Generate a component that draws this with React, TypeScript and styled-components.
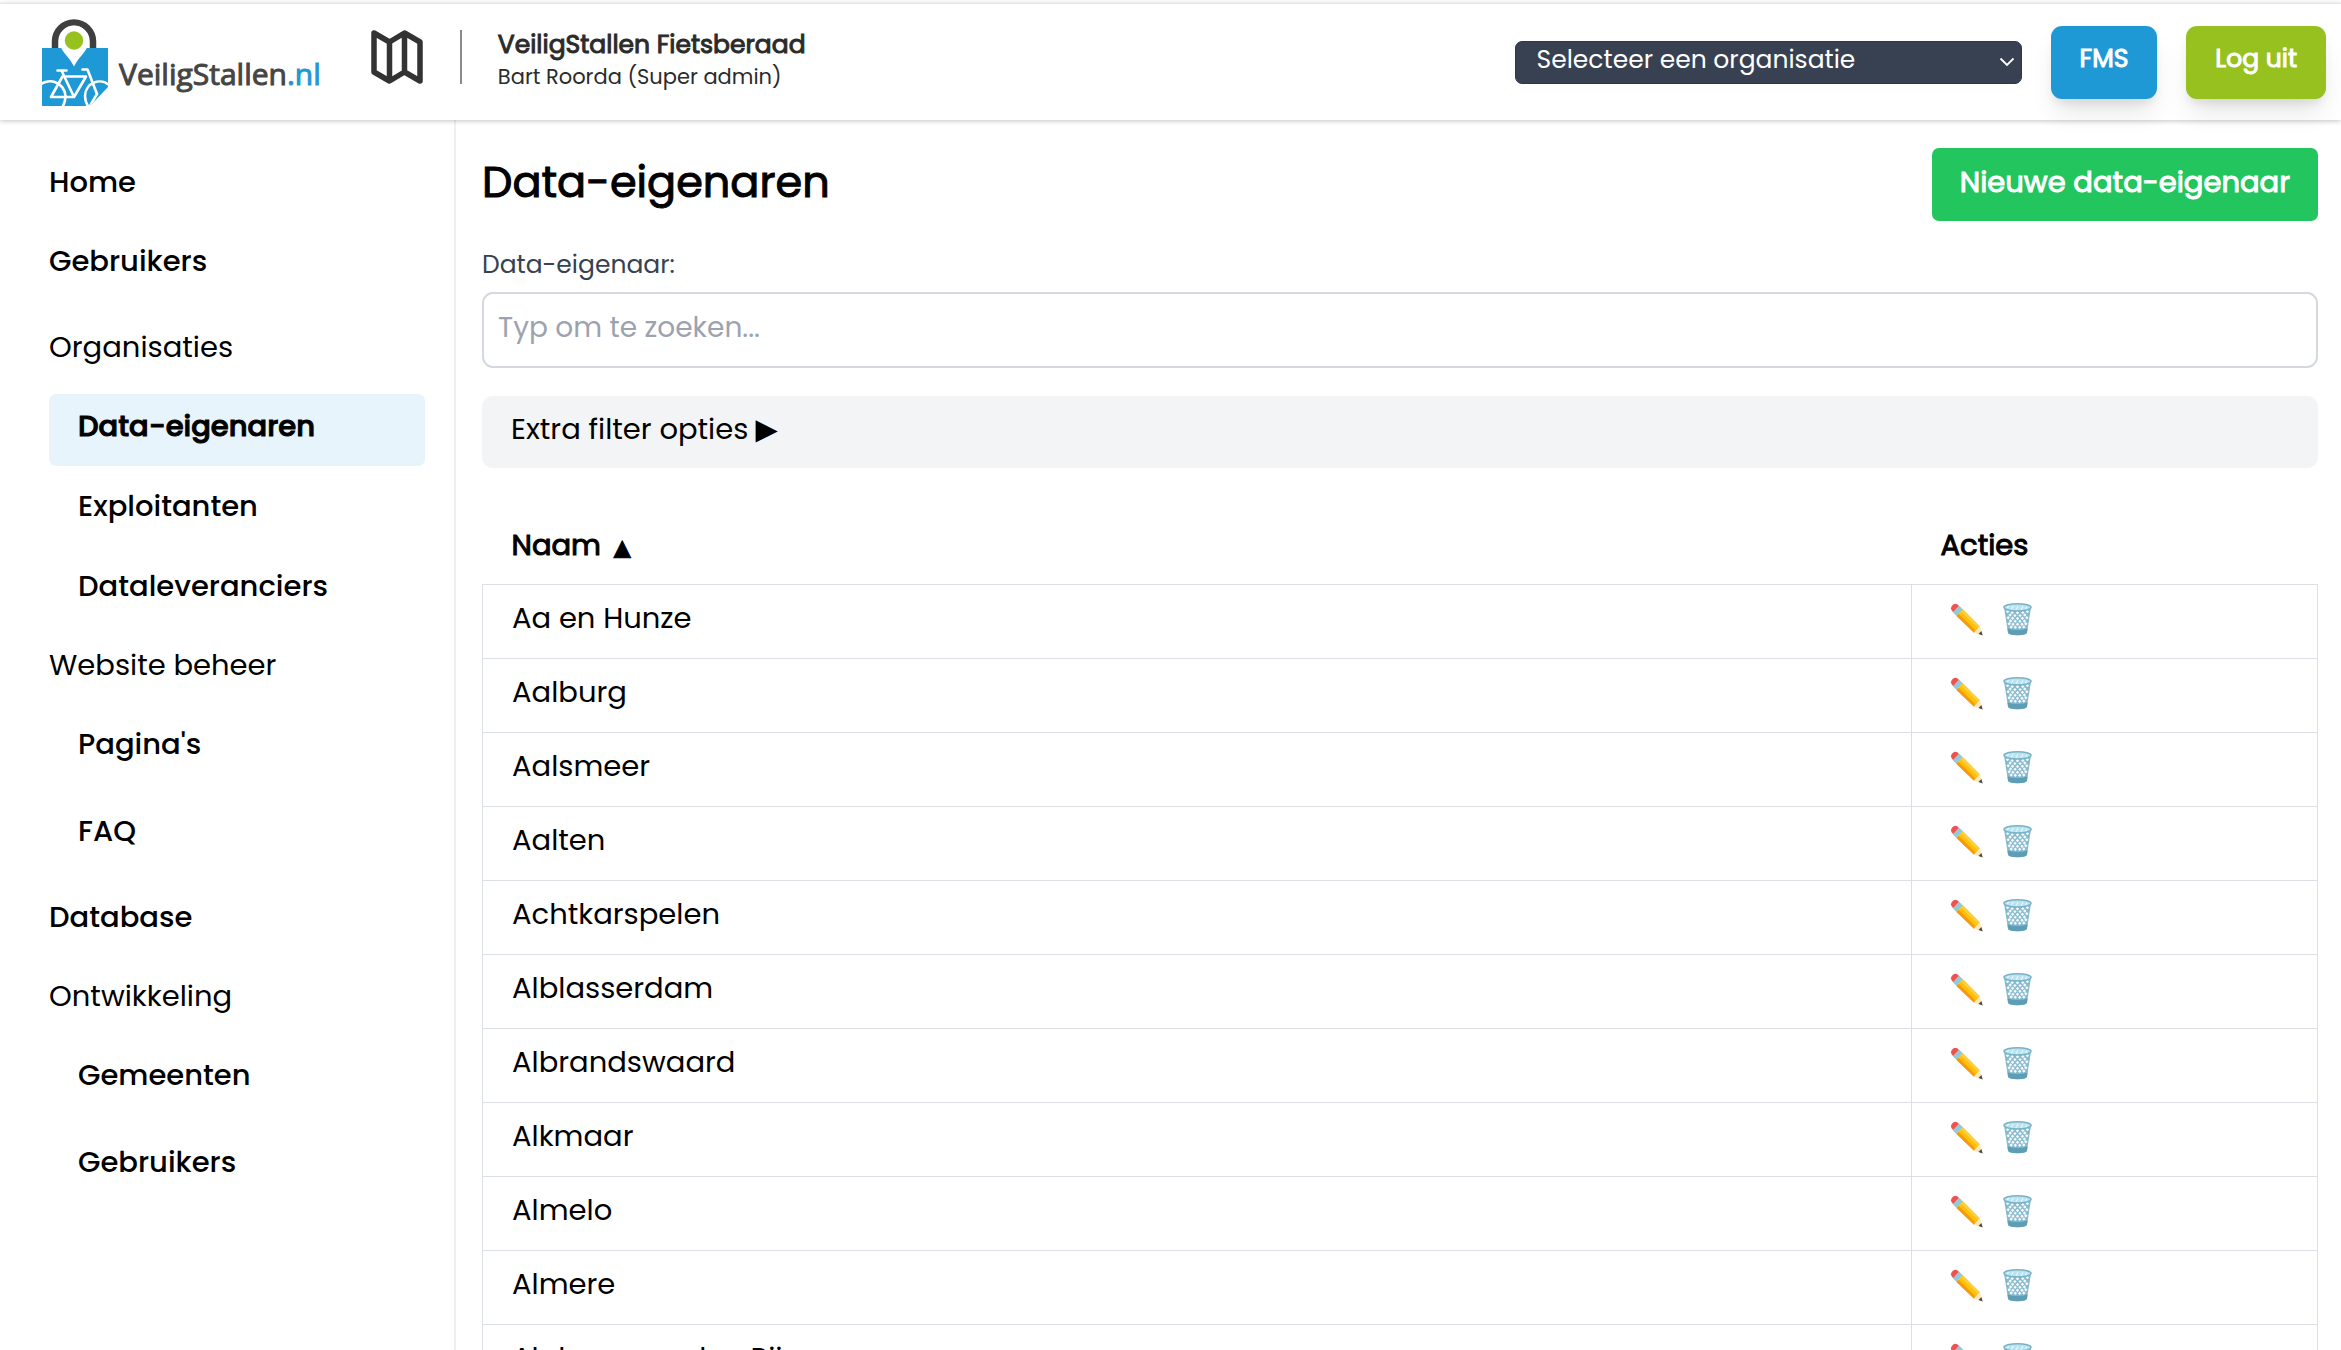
import React from "react";
import styled, { createGlobalStyle, css } from "styled-components";

const GlobalStyle = createGlobalStyle`
  *, *::before, *::after { box-sizing: border-box; }
  body {
    margin: 0;
    background: #fff;
    color: #000;
    font-family: Poppins, Inter, "Liberation Sans", sans-serif;
    font-size: 29px;
    line-height: 40px;
  }
  button, input, select { font: inherit; color: inherit; }
`;

/* Thickens the regular cut without changing its widths. */
const heavy = css`
  -webkit-text-stroke: 1px currentColor;
`;

const Shell = styled.div`
  display: flex;
  flex-direction: column;
  height: 100vh;
  overflow: hidden;
`;

const Header = styled.header`
  display: flex;
  align-items: center;
  flex: none;
  margin-top: 3px;
  padding: 12px 15px 12px 42px;
  height: 117px;
  border-top: 1px solid #e5e7eb;
  background: #fff;
  box-shadow: 0 1px 5px rgba(0, 0, 0, 0.24);
  z-index: 1;
`;

const LogoLink = styled.a`
  display: flex;
  align-items: center;
  gap: 11px;
  text-decoration: none;
  color: #454545;
`;

const LogoText = styled.span`
  ${heavy}
  padding-top: 24px;
  font-family: "Open Sans", "Noto Sans", sans-serif;
  font-size: 30px;
`;

const LogoSuffix = styled.span`
  color: #1f99d6;
`;

const MapLink = styled.a`
  display: flex;
  margin-left: 50px;
  padding-bottom: 10px;
  color: #333;
`;

const Divider = styled.div`
  width: 2px;
  height: 54px;
  margin: 0 36px 10px 37px;
  background: #8a8a8a;
`;

const Account = styled.div`
  flex: 1;
  padding-bottom: 2px;
  color: #2b2b2b;
  line-height: 32px;
`;

const AccountName = styled.div`
  ${heavy}
  font-size: 25px;
`;

const AccountRole = styled.div`
  font-size: 21px;
`;

const HeaderActions = styled.div`
  display: flex;
  align-items: center;
  gap: 29px;
`;

const SelectWrap = styled.div`
  display: grid;
  align-items: center;
  width: 507px;
  > * { grid-area: 1 / 1; }
  > svg { justify-self: end; margin-right: 7px; pointer-events: none; }
`;

const OrgSelect = styled.select`
  appearance: none;
  width: 100%;
  height: 43px;
  padding: 0 40px 4px 21px;
  border: 1px solid #2f3746;
  border-radius: 7px;
  background: #374151;
  color: #fff;
  font-size: 25px;
  line-height: 36px;
`;

const Button = styled.button<{ $tone: "blue" | "lime" | "green" }>`
  ${heavy}
  height: 73px;
  border: 0;
  color: #fff;
  cursor: pointer;
  white-space: nowrap;
  ${({ $tone }) =>
    $tone === "green"
      ? css`
          padding: 0 28px 6px;
          border-radius: 7px;
          background: #22c55e;
        `
      : css`
          padding: 0 29px 6px;
          border-radius: 11px;
          background: ${$tone === "blue" ? "#1f99d6" : "#96c11f"};
          box-shadow: 0 18px 27px -5px rgba(0, 0, 0, 0.1), 0 7px 11px -4px rgba(0, 0, 0, 0.1);
          font-size: 25px;
        `}
`;

const Body = styled.div`
  display: flex;
  flex: 1;
  min-height: 0;
`;

const Sidebar = styled.nav`
  flex: none;
  width: 456px;
  padding: 30px 29px 0 49px;
  border-right: 2px solid #f0f0f1;
`;

const Menu = styled.ul<{ $nested?: boolean }>`
  display: flex;
  flex-direction: column;
  gap: ${({ $nested }) => ($nested ? 8 : 7)}px;
  margin: ${({ $nested }) => ($nested ? "7px 0 0" : 0)};
  padding: 0;
  list-style: none;
`;

const MenuItem = styled.li<{ $spaced?: boolean }>`
  margin-top: ${({ $spaced }) => ($spaced ? 7 : 0)}px;
`;

const itemBox = css`
  display: block;
  height: 72px;
  padding: 12px 0 20px;
`;

const MenuHeading = styled.div`
  ${itemBox}
`;

const MenuLink = styled.a<{ $nested?: boolean; $active?: boolean }>`
  ${itemBox}
  padding-left: ${({ $nested }) => ($nested ? 29 : 0)}px;
  border-radius: 7px;
  background: ${({ $active }) => ($active ? "#e7f4fb" : "transparent")};
  color: inherit;
  font-weight: 500;
  text-decoration: none;
  ${({ $active }) => $active && heavy}
`;

const Main = styled.main`
  flex: 1;
  min-width: 0;
  overflow-y: auto;
  scrollbar-width: none;
  padding: 28px 23px 0 26px;
`;

const TitleRow = styled.div`
  display: flex;
  align-items: flex-start;
  justify-content: space-between;
  margin-bottom: 24px;
`;

const Title = styled.h1`
  ${heavy}
  margin: 0;
  font-size: 43px;
  font-weight: 400;
  line-height: 68px;
`;

const FieldLabel = styled.label`
  display: block;
  margin-bottom: 7px;
  color: #374151;
  font-size: 25px;
`;

const SearchInput = styled.input`
  display: block;
  width: 100%;
  height: 76px;
  padding: 0 14px 6px;
  border: 2px solid #d5d8de;
  border-radius: 11px;
  background: #fff;
  &::placeholder { color: #9ca3af; font-size: 28px; opacity: 1; }
`;

const FilterToggle = styled.button`
  display: flex;
  align-items: center;
  gap: 7px;
  width: 100%;
  height: 72px;
  margin: 28px 0 42px;
  padding: 0 29px 6px;
  border: 0;
  border-radius: 11px;
  background: #f3f4f6;
  cursor: pointer;
`;

const Marker = styled.span<{ $small?: boolean }>`
  margin-left: ${({ $small }) => ($small ? 5 : 0)}px;
  font-family: "DejaVu Sans", sans-serif;
  font-size: ${({ $small }) => ($small ? 22 : 29)}px;
  line-height: 1;
`;

const Table = styled.table`
  width: 100%;
  border-collapse: collapse;
  table-layout: fixed;
`;

const HeadCell = styled.th<{ $actions?: boolean }>`
  ${heavy}
  width: ${({ $actions }) => ($actions ? "406px" : "auto")};
  height: 74px;
  padding: 15px 29px 19px;
  font-weight: 400;
  text-align: left;
`;

const Cell = styled.td`
  height: 74px;
  padding: 13px 29px 20px;
  border: 1px solid #dcdfe4;
`;

const RowActions = styled.div`
  display: flex;
  gap: 20px;
  padding: 2px 0 0 9px;
`;

const IconButton = styled.button`
  display: flex;
  padding: 0;
  border: 0;
  background: none;
  cursor: pointer;
`;

const Logo = () => (
  <svg width="66" height="88" viewBox="0 0 66 88" aria-hidden="true">
    <clipPath id="logo-note">
      <path d="M0 30H66V69L48 88H0Z" />
    </clipPath>
    <path d="M13 34V23.500a19 19 0 0 1 38 0V34" fill="none" stroke="#3f3f3f" strokeWidth="6.500" />
    <path d="M0 30H66V69L48 88H0Z" fill="#1f99d6" />
    <path d="M32 48.500C27 38 17 32 17 22.500a15 15 0 0 1 30 0C47 32 37 38 32 48.500Z" fill="#fff" />
    <circle cx="32" cy="22.500" r="9.200" fill="#96c11f" />
    <g clipPath="url(#logo-note)" fill="none" stroke="#fff" strokeWidth="2.600" strokeLinejoin="round" strokeLinecap="round">
      <path d="M15.500 52.500H24.500M19.700 53 32 79M20.500 58.500H44L32 79H9L20.500 58.500" />
      <path d="M40.500 51.500H45.500L55 76" />
      <path d="M-4 69A15.500 15.500 0 0 1 23.500 78Q23.500 84 20 90" />
      <path d="M68 68A14.500 14.500 0 0 0 43 78Q43 84 47 90M55 76 48 88" />
    </g>
  </svg>
);

const MapIcon = () => (
  <svg width="52" height="54" viewBox="0 0 52 54" fill="none" stroke="currentColor" strokeWidth="5.500" strokeLinejoin="round" aria-hidden="true">
    <path d="M3 3 18.500 12 33.500 3 49 12V51L33.500 42 18.500 51 3 42ZM18.500 12V51M33.500 3V42" />
  </svg>
);

const Chevron = () => (
  <svg width="16" height="10" viewBox="0 0 16 10" fill="none" stroke="#fff" strokeWidth="1.800" aria-hidden="true">
    <path d="M1.500 1.500 8 8l6.500-6.500" />
  </svg>
);

const Pencil = () => (
  <svg width="33" height="33" viewBox="0 0 33 33" aria-hidden="true">
    <path d="M3.200 9.300 9.100 2.900Q6-.8 2.600 1.900-.9 5.400 3.200 9.300Z" fill="#ef5350" />
    <path d="M3 9.500 9.300 2.700 13.100 6.500 6.500 13Z" fill="#90cbd9" />
    <path d="M6.500 13 13.100 6.500 30 23.400 24 29.800Z" fill="#ffc107" />
    <path d="M6.500 13 8.700 10.800 26 28 24 29.800Z" fill="#f59a0c" />
    <path d="M11 8.600 13.100 6.500 30 23.400 28.300 25.600Z" fill="#fdd03b" />
    <path d="M24 29.800Q24.500 27.600 26.300 27.300 26.600 25.500 28.300 25.200 28.500 23.600 30 23.400L32.500 32.300Z" fill="#ffe6b5" />
    <path d="m28.500 31.100 2.900-3 1.300 4.300Z" fill="#4a4a4a" />
  </svg>
);

const TRASH_HOLES = [
  [4.6, 8.6], [9.2, 9.6], [14.5, 9.8], [19.8, 9.6], [24.4, 8.6],
  [7.2, 12], [11.9, 12.6], [17.1, 12.6], [21.8, 12],
  [5.2, 14.8], [9.6, 15.2], [14.5, 15.5], [19.4, 15.2], [23.8, 14.8],
  [7.6, 18], [12.1, 18.3], [16.9, 18.3], [21.4, 18],
  [6.2, 20.8], [10, 21.2], [14.5, 21.3], [19, 21.2], [22.8, 20.8],
  [8.2, 24], [12.3, 24.2], [16.7, 24.2], [20.8, 24],
];

const Trash = () => (
  <svg width="30" height="33" viewBox="0 0 30 33" aria-hidden="true">
    <path d="M1 4.500 5 29.500Q5.500 32.300 14.500 32.300T24 29.500L28 4.500Z" fill="#86b9cc" />
    <path d="M4.500 25.500Q14.500 28.500 24.500 25.500L24 29.500Q23.500 32.300 14.500 32.300T5 29.500Z" fill="#5d9db5" />
    {TRASH_HOLES.map(([x, y]) => (
      <path key={`${x}-${y}`} d={`M${x - 1.7} ${y}l1.700-1.700 1.700 1.700-1.700 1.700Z`} fill="#f7fcfe" />
    ))}
    <ellipse cx="14.500" cy="4.300" rx="13.600" ry="3.600" fill="#b9e2ee" stroke="#78b2c7" strokeWidth="1.400" />
    <path d="M4 4.800 6 3.200M8 6.200 10.500 3M13 6.800 15 3.200M18 6.600 20 3.200M22.500 6 24 3.600" stroke="#e9f7fb" strokeWidth="1.200" />
  </svg>
);

type Entry = { label: string; spaced?: boolean; active?: boolean; children?: Entry[] };

const MENU: Entry[] = [
  { label: "Home" },
  { label: "Gebruikers" },
  {
    label: "Organisaties",
    spaced: true,
    children: [{ label: "Data-eigenaren", active: true }, { label: "Exploitanten" }, { label: "Dataleveranciers" }],
  },
  { label: "Website beheer", children: [{ label: "Pagina's" }, { label: "FAQ", spaced: true }] },
  { label: "Database", spaced: true },
  { label: "Ontwikkeling", children: [{ label: "Gemeenten" }, { label: "Gebruikers", spaced: true }] },
];

const OWNERS = [
  "Aa en Hunze",
  "Aalburg",
  "Aalsmeer",
  "Aalten",
  "Achtkarspelen",
  "Alblasserdam",
  "Albrandswaard",
  "Alkmaar",
  "Almelo",
  "Almere",
  "Alphen aan den Rijn",
];

const MenuEntries = ({ entries, nested }: { entries: Entry[]; nested?: boolean }) => (
  <Menu $nested={nested}>
    {entries.map((entry) => (
      <MenuItem key={entry.label} $spaced={entry.spaced}>
        {entry.children ? (
          <>
            <MenuHeading>{entry.label}</MenuHeading>
            <MenuEntries entries={entry.children} nested />
          </>
        ) : (
          <MenuLink href="#" $nested={nested} $active={entry.active}>
            {entry.label}
          </MenuLink>
        )}
      </MenuItem>
    ))}
  </Menu>
);

export default function App() {
  return (
    <Shell>
      <GlobalStyle />
      <Header>
        <LogoLink href="#">
          <Logo />
          <LogoText>
            VeiligStallen<LogoSuffix>.nl</LogoSuffix>
          </LogoText>
        </LogoLink>
        <MapLink href="#" aria-label="Kaart">
          <MapIcon />
        </MapLink>
        <Divider />
        <Account>
          <AccountName>VeiligStallen Fietsberaad</AccountName>
          <AccountRole>Bart Roorda (Super admin)</AccountRole>
        </Account>
        <HeaderActions>
          <SelectWrap>
            <OrgSelect aria-label="Organisatie">
              <option>Selecteer een organisatie</option>
            </OrgSelect>
            <Chevron />
          </SelectWrap>
          <Button type="button" $tone="blue">FMS</Button>
          <Button type="button" $tone="lime">Log uit</Button>
        </HeaderActions>
      </Header>
      <Body>
        <Sidebar>
          <MenuEntries entries={MENU} />
        </Sidebar>
        <Main>
          <TitleRow>
            <Title>Data-eigenaren</Title>
            <Button type="button" $tone="green">Nieuwe data-eigenaar</Button>
          </TitleRow>
          <FieldLabel htmlFor="owner-search">Data-eigenaar:</FieldLabel>
          <SearchInput id="owner-search" type="text" placeholder="Typ om te zoeken..." />
          <FilterToggle type="button" aria-expanded="false">
            Extra filter opties <Marker>▶</Marker>
          </FilterToggle>
          <Table>
            <thead>
              <tr>
                <HeadCell>
                  Naam <Marker $small>▲</Marker>
                </HeadCell>
                <HeadCell $actions>Acties</HeadCell>
              </tr>
            </thead>
            <tbody>
              {OWNERS.map((owner) => (
                <tr key={owner}>
                  <Cell>{owner}</Cell>
                  <Cell>
                    <RowActions>
                      <IconButton type="button" aria-label={`${owner} bewerken`}>
                        <Pencil />
                      </IconButton>
                      <IconButton type="button" aria-label={`${owner} verwijderen`}>
                        <Trash />
                      </IconButton>
                    </RowActions>
                  </Cell>
                </tr>
              ))}
            </tbody>
          </Table>
        </Main>
      </Body>
    </Shell>
  );
}
